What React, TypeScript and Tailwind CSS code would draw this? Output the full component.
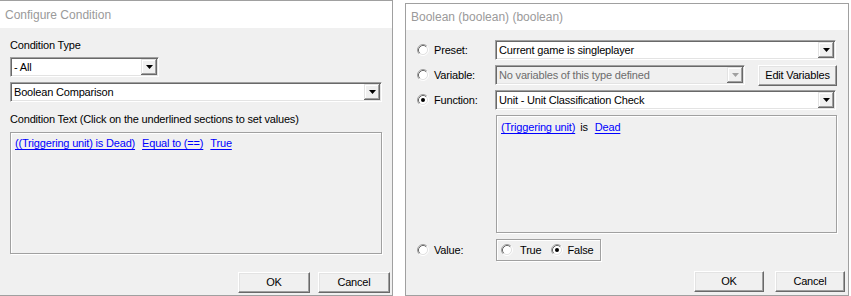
import React from "react"

// classic win32 dialog look: 3D borders via inset shadows
const sunken =
  "border border-t-[#a0a0a0] border-l-[#a0a0a0] border-r-white border-b-white shadow-[inset_1px_1px_0_#696969,inset_-1px_-1px_0_#e3e3e3]"
const raised =
  "border border-t-white border-l-white border-r-[#696969] border-b-[#696969] shadow-[inset_-1px_-1px_0_#a0a0a0,inset_1px_1px_0_#e3e3e3]"
const etched = "border border-[#a0a0a0] shadow-[inset_1px_1px_0_#fff,1px_1px_0_#fff]"

function Arrow({ disabled = false }: { disabled?: boolean }) {
  return (
    <div className="flex h-full w-[16px] shrink-0 items-center justify-center bg-[#f0f0f0] shadow-[inset_-1px_-1px_0_#696969,inset_1px_1px_0_#e3e3e3,inset_-2px_-2px_0_#a0a0a0,inset_2px_2px_0_#fff]">
      <svg width="7" height="4" viewBox="0 0 7 4">
        <polygon points="0,0 7,0 3.5,4" fill={disabled ? "#a0a0a0" : "#000"} />
      </svg>
    </div>
  )
}

function Combo({ text, width, disabled = false }: { text: string; width: string; disabled?: boolean }) {
  return (
    <div className={`flex h-[20px] shrink-0 p-[1px] ${sunken} ${width} ${disabled ? "bg-[#f0f0f0]" : "bg-white"}`}>
      <span className={`flex-1 truncate pl-[2px] leading-[16px] ${disabled ? "text-[#6d6d6d]" : "text-black"}`}>{text}</span>
      <Arrow disabled={disabled} />
    </div>
  )
}

function Button({ label, width }: { label: string; width: string }) {
  return (
    <div className={`flex h-[21px] items-center justify-center bg-[#f0f0f0] ${raised} ${width}`}>{label}</div>
  )
}

function Radio({ checked = false }: { checked?: boolean }) {
  return (
    <svg width="12" height="12" viewBox="0 0 12 12" className="shrink-0">
      <circle cx="6" cy="6" r="4.5" fill="#fff" />
      <path d="M2.11 9.89A5.5 5.5 0 0 1 9.89 2.11" fill="none" stroke="#a0a0a0" />
      <path d="M9.89 2.11A5.5 5.5 0 0 1 2.11 9.89" fill="none" stroke="#fff" />
      <path d="M2.82 9.18A4.5 4.5 0 0 1 9.18 2.82" fill="none" stroke="#696969" />
      <path d="M9.18 2.82A4.5 4.5 0 0 1 2.82 9.18" fill="none" stroke="#e3e3e3" />
      {checked && <circle cx="6" cy="6" r="2" fill="#000" />}
    </svg>
  )
}

function Link({ children }: { children: React.ReactNode }) {
  return <span className="text-[#0000ff] underline underline-offset-[2px]">{children}</span>
}

function ConfigureCondition() {
  return (
    <div className="flex h-[296px] w-[393px] shrink-0 flex-col border-t border-r border-b border-[#a0a0a0]">
      <div className="flex h-[27px]">
        <div className="flex flex-1 items-center bg-white pl-[5px] text-[12px] tracking-normal text-[#9a9a9a]">Configure Condition</div>
      </div>
      <div className="flex flex-1 flex-col bg-[#f0f0f0] pl-[10px] pr-[2px] pt-[10px]">
        <div className="mr-[8px] flex flex-col">
          <div className="h-[14px] leading-[14px]">Condition Type</div>
          <div className="mt-[5px]">
            <Combo text="- All" width="w-[149px]" />
          </div>
          <div className="mt-[5px]">
            <Combo text="Boolean Comparison" width="w-full" />
          </div>
          <div className="mt-[10px] h-[14px] leading-[14px]">Condition Text (Click on the underlined sections to set values)</div>
          <div className={`mt-[6px] h-[122px] ${etched} px-[4px] pt-[3px]`}>
            <div className="flex gap-[7px] leading-[14px]">
              <Link>((Triggering unit) is Dead)</Link>
              <Link>Equal to (==)</Link>
              <Link>True</Link>
            </div>
          </div>
        </div>
        <div className="mt-[18px] flex justify-end gap-[8px]">
          <Button label="OK" width="w-[72px]" />
          <Button label="Cancel" width="w-[72px]" />
        </div>
      </div>
    </div>
  )
}

function RowLabel({ label, checked = false }: { label: string; checked?: boolean }) {
  return (
    <div className="flex w-[78px] shrink-0 items-center gap-[5px]">
      <Radio checked={checked} />
      <span>{label}</span>
    </div>
  )
}

function BooleanDialog() {
  return (
    <div className="ml-[12px] mt-[3px] flex h-[293px] w-[444px] shrink-0 flex-col border border-[#a0a0a0]">
      <div className="flex h-[26px]">
        <div className="flex flex-1 items-center bg-white pl-[5px] text-[12px] tracking-normal text-[#9a9a9a]">Boolean (boolean) (boolean)</div>
      </div>
      <div className="flex flex-1 flex-col bg-[#f0f0f0] pl-[11px] pr-[3px] pt-[10px]">
        <div className="flex flex-col gap-[5px]">
          <div className="flex h-[20px] items-center">
            <RowLabel label="Preset:" />
            <Combo text="Current game is singleplayer" width="w-[341px]" />
          </div>
          <div className="flex h-[20px] items-start">
            <div className="flex h-[20px] items-center">
              <RowLabel label="Variable:" />
            </div>
            <Combo text="No variables of this type defined" width="w-[250px]" disabled />
            <div className="ml-[13px]">
              <Button label="Edit Variables" width="w-[79px]" />
            </div>
          </div>
          <div className="flex h-[20px] items-center">
            <RowLabel label="Function:" checked />
            <Combo text="Unit - Unit Classification Check" width="w-[341px]" />
          </div>
        </div>
        <div className={`ml-[79px] mt-[5px] h-[118px] w-[341px] ${etched} px-[4px] pt-[4px]`}>
          <div className="flex gap-[5px] leading-[14px]">
            <Link>(Triggering unit)</Link>
            <span>is</span>
            <span className="ml-[2px]">
              <Link>Dead</Link>
            </span>
          </div>
        </div>
        <div className="mt-[6px] flex h-[22px] items-center">
          <div className="flex w-[79px] shrink-0 items-center gap-[5px]">
            <Radio />
            <span>Value:</span>
          </div>
          <div className={`flex h-[22px] w-[105px] items-center pl-[4px] ${etched}`}>
            <Radio />
            <span className="ml-[7px]">True</span>
            <span className="ml-[9px]">
              <Radio checked />
            </span>
            <span className="ml-[5px]">False</span>
          </div>
        </div>
        <div className="mt-[10px] flex justify-end gap-[11px]">
          <Button label="OK" width="w-[70px]" />
          <Button label="Cancel" width="w-[70px]" />
        </div>
      </div>
    </div>
  )
}

export default function App() {
  return (
    <div className="flex h-[296px] w-[851px] items-start overflow-hidden bg-white font-['Liberation_Sans',Arial,sans-serif] text-[11px] tracking-[-0.18px] text-black">
      <ConfigureCondition />
      <BooleanDialog />
    </div>
  )
}
